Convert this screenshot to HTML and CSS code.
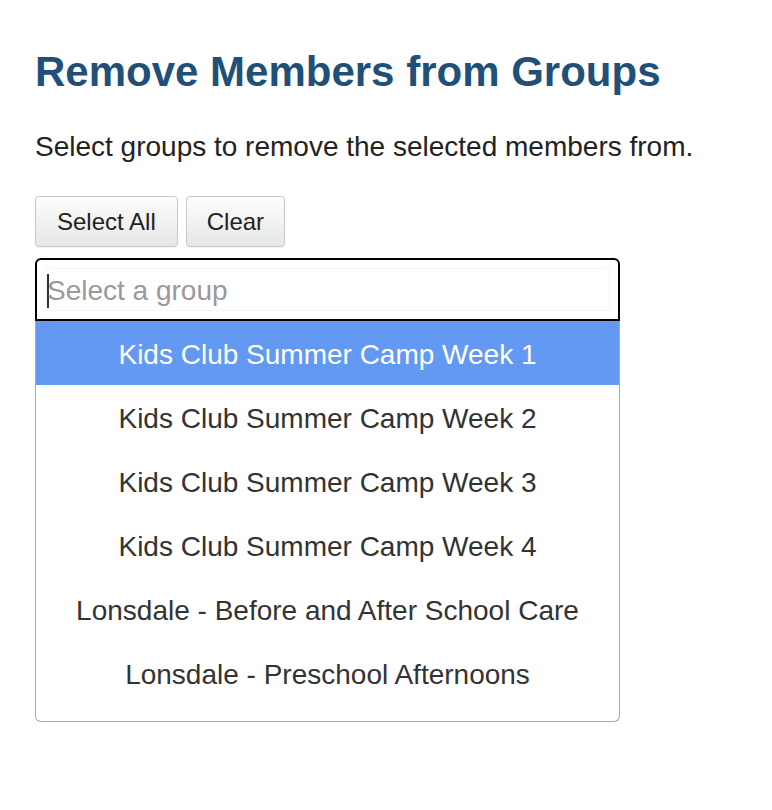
FILE: index.html
```html
<!DOCTYPE html>
<html>
<head>
<meta charset="utf-8">
<link rel="stylesheet" href="styles.css">
</head>
<body>
<main class="page">
  <h1 class="title">Remove Members from Groups</h1>
  <p class="lead">Select groups to remove the selected members from.</p>
  <div class="actions">
    <button class="btn btn-wide">Select All</button>
    <button class="btn">Clear</button>
  </div>
  <div class="chooser">
    <div class="search">
      <div class="search-field"><span class="caret"></span><span class="placeholder">Select a group</span></div>
    </div>
    <ul class="results">
      <li class="result active">Kids Club Summer Camp Week 1</li>
      <li class="result">Kids Club Summer Camp Week 2</li>
      <li class="result">Kids Club Summer Camp Week 3</li>
      <li class="result">Kids Club Summer Camp Week 4</li>
      <li class="result">Lonsdale - Before and After School Care</li>
      <li class="result">Lonsdale - Preschool Afternoons</li>
    </ul>
  </div>
</main>
</body>
</html>
```
FILE: styles.css
```css
* { box-sizing: border-box; }
body {
  margin: 0;
  background: #fff;
  font-family: "Liberation Sans", Arial, sans-serif;
  color: #333;
}
.page {
  padding: 48px 35px 0;
}
.title {
  margin: 0;
  font-size: 42px;
  line-height: 48px;
  font-weight: bold;
  color: #1f5079;
}
.lead {
  margin: 35px 0 0;
  font-size: 28px;
  line-height: 32px;
  color: #222;
}
.actions {
  display: flex;
  gap: 8px;
  margin-top: 33px;
}
.btn {
  height: 51px;
  padding: 0 20px;
  font-family: inherit;
  font-size: 24px;
  color: #222;
  border: 1px solid #c8c8c8;
  border-radius: 4px;
  background: linear-gradient(#fdfdfd, #e6e6e6);
  box-shadow: 0 1px 1px rgba(0,0,0,0.05);
}
.btn-wide {
  padding: 0 21px;
}
.chooser {
  width: 585px;
  margin-top: 11px;
}
.search {
  height: 63px;
  border: 2px solid #000;
  border-radius: 6px 6px 0 0;
  padding: 8px 8px 8px 9px;
}
.search-field {
  height: 100%;
  display: flex;
  align-items: center;
  border: 1px solid #f2f5f9;
  border-radius: 4px;
  padding-top: 2px;
}
.caret {
  width: 2px;
  height: 34px;
  background: #333;
}
.placeholder {
  margin-left: -2px;
  font-size: 28px;
  color: #999;
}
.results {
  list-style: none;
  margin: 0;
  padding: 0 0 16px;
  border: 1px solid #aaa;
  border-top: none;
  border-radius: 0 0 6px 6px;
}
.result {
  height: 64px;
  display: flex;
  align-items: center;
  justify-content: center;
  padding-top: 3px;
  font-size: 28px;
  color: #333;
}
.result.active {
  background: #6499f3;
  color: #fff;
}
```
